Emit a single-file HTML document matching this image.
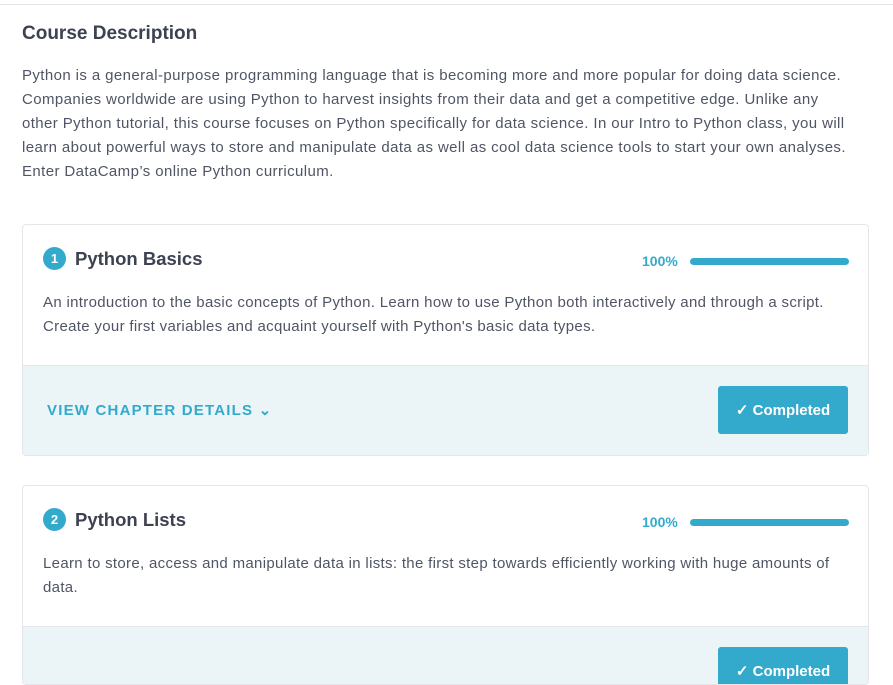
<!DOCTYPE html>
<html><head><style>
*{margin:0;padding:0;box-sizing:border-box}
body{width:893px;height:657px;overflow:hidden;background:#fff;font-family:"Liberation Sans",sans-serif;color:#3d4251;position:relative}
.top{position:absolute;left:0;top:0;width:893px;height:5px;border-bottom:1px solid #e3e5e8;background:#fff}
h2{position:absolute;left:22px;top:23px;font-size:19px;font-weight:bold;color:#3d4251;white-space:nowrap}
.p{position:absolute;left:22px;top:64px;font-size:15px;letter-spacing:.4px;line-height:24px;color:#505565;white-space:nowrap}
.card{position:absolute;left:22px;width:847px;border:1px solid #e4e6ea;border-radius:4px;background:#fff;overflow:hidden}
.num{position:absolute;left:20px;width:23px;height:23px;border-radius:50%;background:#33aacc;color:#fff;font-size:13px;font-weight:bold;text-align:center;line-height:23px}
.t{position:absolute;left:52px;font-size:18.5px;font-weight:bold;color:#3d4251;white-space:nowrap}
.pct{position:absolute;left:619px;font-size:14px;font-weight:bold;color:#33aacc}
.bar{position:absolute;left:667px;width:159px;height:7px;border-radius:4px;background:#33aacc}
.d{position:absolute;left:20px;font-size:15px;letter-spacing:.32px;line-height:24px;color:#505565;white-space:nowrap}
.foot{position:absolute;left:0;width:847px;height:92px;background:#ebf4f7;border-top:1px solid #e4e6ea}
.vcd{position:absolute;left:24px;top:35px;font-size:15px;font-weight:bold;letter-spacing:1.2px;color:#33aacc}
.btn{position:absolute;left:695px;top:20px;width:130px;height:48px;border-radius:3px;background:#33aacc;color:#fff;font-size:15px;font-weight:bold;text-align:center;line-height:50px}
</style></head><body>
<div class="top"></div>
<h2>Course Description</h2>
<div class="p">Python is a general-purpose programming language that is becoming more and more popular for doing data science.<br>Companies worldwide are using Python to harvest insights from their data and get a competitive edge. Unlike any<br>other Python tutorial, this course focuses on Python specifically for data science. In our Intro to Python class, you will<br>learn about powerful ways to store and manipulate data as well as cool data science tools to start your own analyses.<br>Enter DataCamp’s online Python curriculum.</div>

<div class="card" style="top:224px;height:232px">
<div class="num" style="top:22px">1</div>
<div class="t" style="top:23px">Python Basics</div>
<div class="pct" style="top:28px">100%</div>
<div class="bar" style="top:33px"></div>
<div class="d" style="top:66px">An introduction to the basic concepts of Python. Learn how to use Python both interactively and through a script.<br>Create your first variables and acquaint yourself with Python's basic data types.</div>
<div class="foot" style="top:140px">
<div class="vcd">VIEW CHAPTER DETAILS &#8964;</div>
<div class="btn">✓ Completed</div>
</div>
</div>

<div class="card" style="top:485px;height:200px">
<div class="num" style="top:22px">2</div>
<div class="t" style="top:23px">Python Lists</div>
<div class="pct" style="top:28px">100%</div>
<div class="bar" style="top:33px"></div>
<div class="d" style="top:66px">Learn to store, access and manipulate data in lists: the first step towards efficiently working with huge amounts of<br>data.</div>
<div class="foot" style="top:140px">
<div class="btn">✓ Completed</div>
</div>
</div>
</body></html>
